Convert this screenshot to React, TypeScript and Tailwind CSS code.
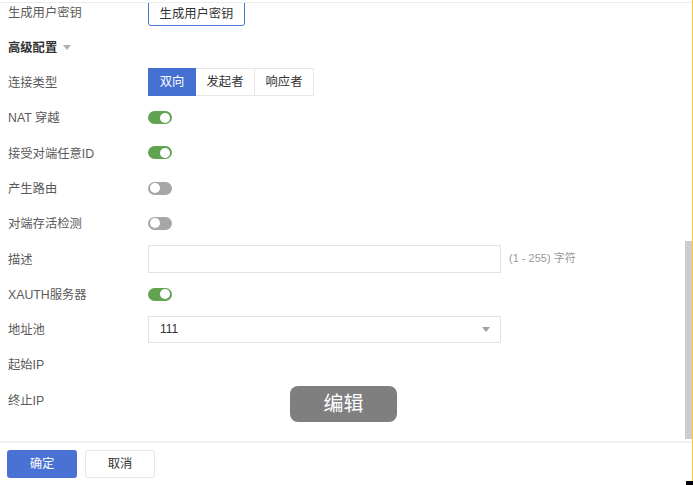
import React from "react";

const font = { fontFamily: '"Liberation Sans", "Noto Sans CJK SC", sans-serif' };

function Tri({ color }: { color: string }) {
  return (
    <svg width="8" height="5" viewBox="0 0 8 5">
      <path d="M0 0 L8 0 L4 5 Z" fill={color} />
    </svg>
  );
}

function Toggle({ on }: { on: boolean }) {
  return (
    <div
      className={
        "relative h-[13px] w-[24px] rounded-full " +
        (on ? "bg-[#62a352]" : "bg-[#a6a6a6]")
      }
    >
      <div
        className={
          "absolute top-[1.5px] h-[10px] w-[10px] rounded-full bg-white " +
          (on ? "right-[2px]" : "left-[2px]")
        }
      />
    </div>
  );
}

function Row({
  label,
  children,
  bold,
}: {
  label: React.ReactNode;
  children?: React.ReactNode;
  bold?: boolean;
}) {
  return (
    <div className="flex h-[35.3px] items-center">
      <div
        className={
          "w-[148px] pl-2 pt-[2px] text-[12.3px] leading-none " +
          (bold ? "font-bold text-[#333]" : "text-[#5a5a5a]")
        }
      >
        {label}
      </div>
      <div className="flex flex-1 items-center">{children}</div>
    </div>
  );
}

export default function App() {
  return (
    <div
      className="relative flex h-[485px] w-[693px] overflow-hidden bg-white"
      style={font}
    >
      <div className="flex w-[692px] flex-col">
        <div className="h-[3px] border-b border-[#ececec]" />
        <div className="flex flex-1 overflow-hidden">
          <div className="flex-1 overflow-hidden">
            <div className="-mt-[9px]">
              <Row label="生成用户密钥">
                <div className="flex h-[28px] w-[97px] items-center justify-center rounded-[3px] border border-[#4a78d6] pt-[6px] text-[12.3px] leading-none text-[#333]">
                  生成用户密钥
                </div>
              </Row>
              <Row
                bold
                label={
                  <span className="flex items-center gap-[6px]">
                    高级配置
                    <Tri color="#b0b0b0" />
                  </span>
                }
              />
              <Row label="连接类型">
                <div className="flex h-[28px] text-[12.3px]">
                  <div className="flex w-[48px] items-center justify-center bg-[#4470d2] text-white">
                    双向
                  </div>
                  <div className="flex w-[59px] items-center justify-center border border-l-0 border-[#e6e6e6] text-[#333]">
                    发起者
                  </div>
                  <div className="flex w-[59px] items-center justify-center border border-l-0 border-[#e6e6e6] text-[#333]">
                    响应者
                  </div>
                </div>
              </Row>
              <Row label="NAT 穿越">
                <Toggle on />
              </Row>
              <Row label="接受对端任意ID">
                <Toggle on />
              </Row>
              <Row label="产生路由">
                <Toggle on={false} />
              </Row>
              <Row label="对端存活检测">
                <Toggle on={false} />
              </Row>
              <Row label="描述">
                <div className="h-[28px] w-[353px] border border-[#e3e3e3]" />
                <span className="ml-[8px] text-[11px] text-[#999]">(1 - 255) 字符</span>
              </Row>
              <Row label="XAUTH服务器">
                <Toggle on />
              </Row>
              <Row label="地址池">
                <div className="flex h-[27px] w-[353px] items-center justify-between border border-[#e3e3e3] pl-[11px] pr-[10px] text-[12px] text-[#333]">
                  <span>111</span>
                  <Tri color="#a0a0a0" />
                </div>
              </Row>
              <Row label="起始IP" />
              <Row label="终止IP" />
            </div>
          </div>
          <div className="flex w-[7px] flex-col">
            <div className="h-[238px]" />
            <div className="h-[198px] bg-[#cdcdcd]" />
          </div>
        </div>
        <div className="h-[44px] border-t-[2px] border-[#f2f2f2] bg-white">
          <div className="flex gap-[8px] pl-[7px] pt-[7px]">
            <div className="flex h-[28px] w-[70px] items-center justify-center rounded-[3px] bg-[#4a72d4] text-[12.3px] text-white">
              确定
            </div>
            <div className="flex h-[28px] w-[70px] items-center justify-center rounded-[3px] border border-[#e6e6e6] text-[12.3px] text-[#333]">
              取消
            </div>
          </div>
        </div>
      </div>
      <div className="w-[1px] bg-[#f3c84c]" />
      <div className="absolute bottom-0 right-0 h-[4px] w-[7px] bg-black" />
      <div className="absolute left-[290px] top-[386px] flex h-[36px] w-[107px] items-center justify-center rounded-[8px] bg-[#7f7f7f] text-[20px] text-white">
        编辑
      </div>
    </div>
  );
}
